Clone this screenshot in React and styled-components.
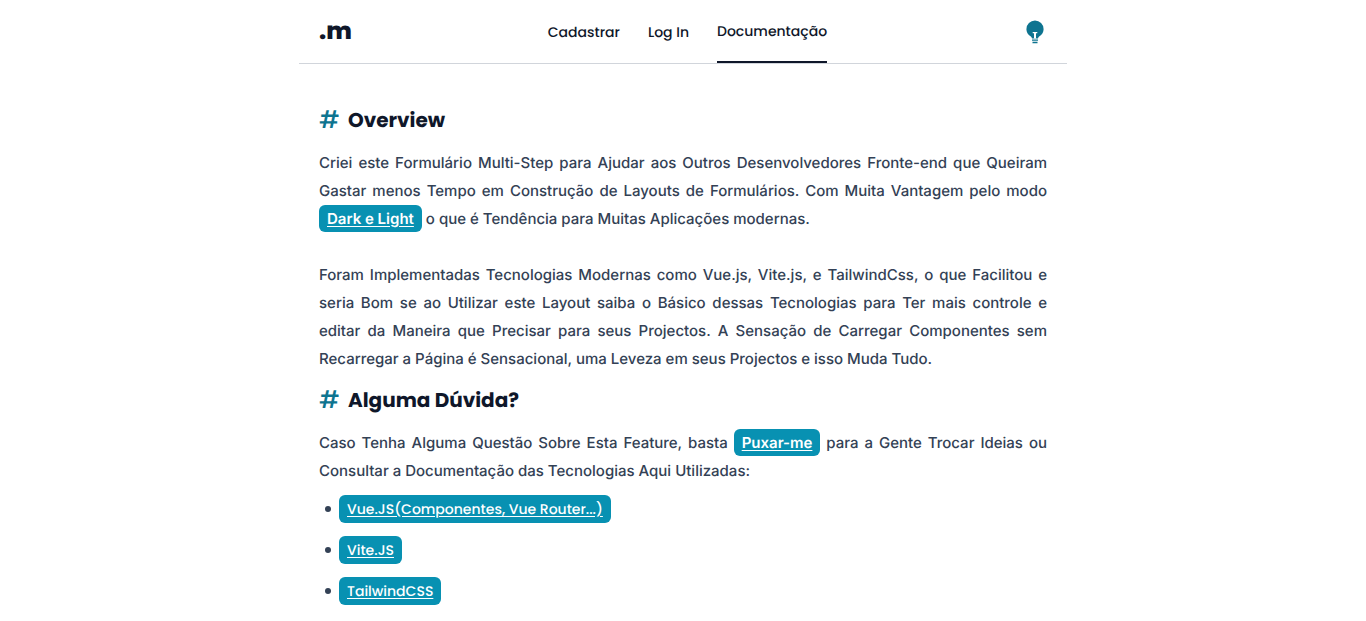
import React from "react";
import styled, { createGlobalStyle } from "styled-components";

const display = `Poppins, Inter, "Open Sans", sans-serif`;

const GlobalStyle = createGlobalStyle`
  *, *::before, *::after { box-sizing: border-box; }
  body {
    margin: 0;
    background: #ffffff;
    color: #334155;
    font-family: Inter, sans-serif;
    font-size: 15px;
    font-weight: 500;
    line-height: 28px;
    text-rendering: geometricPrecision;
  }
`;

const Page = styled.div`
  max-width: 768px;
  margin: 0 auto;
`;

const Header = styled.header`
  display: flex;
  align-items: center;
  justify-content: space-between;
  height: 64px;
  padding: 0 20px;
  border-bottom: 1px solid #d1d5db;
`;

const Logo = styled.a`
  color: #0f172a;
  font-family: ${display};
  font-size: 24px;
  font-weight: 800;
  text-decoration: none;
`;

const Nav = styled.nav`
  display: flex;
  align-self: stretch;
  gap: 28px;
`;

const NavLink = styled.a`
  display: flex;
  align-items: center;
  border-bottom: ${(p) => (p.$active ? "2px solid #0f172a" : "0")};
  color: #0f172a;
  font-family: ${display};
  font-size: 14px;
  text-decoration: none;
`;

const ThemeButton = styled.button`
  display: flex;
  padding: 0;
  border: 0;
  background: none;
  color: #0e7490;
  cursor: pointer;
`;

const Content = styled.main`
  padding: 40px 20px 16px;
`;

const Heading = styled.h2`
  display: flex;
  align-items: center;
  gap: 8px;
  margin: 0 0 13px;
  color: #0f172a;
  font-family: ${display};
  font-size: 20px;
  font-weight: 700;
  line-height: 32px;

  p + & { margin-top: 11px; }
`;

const Hash = styled.span`
  padding-top: 2px;
  color: #0e7490;
  font-size: 24px;
  font-weight: 500;
  line-height: 28px;
`;

const Paragraph = styled.p`
  margin: 0;
  text-align: justify;

  & + & { margin-top: 28px; }
`;

const Pill = styled.a`
  padding: 4px 8px;
  border-radius: 6px;
  background: #0891b2;
  color: #ffffff;
  font-weight: 600;
  text-underline-offset: 2px;
`;

const LinkList = styled.ul`
  display: grid;
  gap: 13px;
  margin: 10px 0 0;
  padding: 0 0 0 6px;
  list-style: none;
`;

const ListItem = styled.li`
  display: flex;
  align-items: center;
  gap: 8px;

  &::before {
    content: "";
    width: 6px;
    height: 6px;
    border-radius: 50%;
    background: #334155;
  }
`;

const ListPill = styled(Pill)`
  padding: 0 8px;
  font-family: ${display};
  font-size: 14px;
  font-weight: 500;
`;

const navItems = ["Cadastrar", "Log In", "Documentação"];
const resources = [
  ["Vue.JS(Componentes, Vue Router...)", "https://vuejs.org"],
  ["Vite.JS", "https://vitejs.dev"],
  ["TailwindCSS", "https://tailwindcss.com"],
];

function BulbIcon() {
  return (
    <svg width="24" height="24" viewBox="0 0 24 24" fill="currentColor" aria-hidden="true">
      <path
        fillRule="evenodd"
        d="M12 .6a8.6 8.6 0 0 0-8.6 8.6c0 3 1.600 5.300 3.700 6.700 1.200.8 1.900 1.500 1.900 2.700h6c0-1.200.7-1.900 1.900-2.700 2.100-1.400 3.700-3.700 3.700-6.700A8.600 8.600 0 0 0 12 .6ZM9.700 12h4.600v1.200h-1.300v5h-2v-5H9.700V12Z"
      />
      <path d="M9 19.400h6v1.300H9zM9.500 21.700h5v1.500h-5z" />
    </svg>
  );
}

function SectionTitle({ children }) {
  return (
    <Heading>
      <Hash>#</Hash>
      {children}
    </Heading>
  );
}

export default function App() {
  return (
    <>
      <GlobalStyle />
      <Page>
        <Header>
          <Logo href="#">.m</Logo>
          <Nav>
            {navItems.map((item) => (
              <NavLink key={item} href="#" $active={item === "Documentação"}>
                {item}
              </NavLink>
            ))}
          </Nav>
          <ThemeButton type="button" aria-label="Alternar tema">
            <BulbIcon />
          </ThemeButton>
        </Header>
        <Content>
          <SectionTitle>Overview</SectionTitle>
          <Paragraph>
            Criei este Formulário Multi-Step para Ajudar aos Outros
            Desenvolvedores Fronte-end que Queiram Gastar menos Tempo em
            Construção de Layouts de Formulários. Com Muita Vantagem pelo modo{" "}
            <Pill href="#">Dark e Light</Pill> o que é Tendência para Muitas
            Aplicações modernas.
          </Paragraph>
          <Paragraph>
            Foram Implementadas Tecnologias Modernas como Vue.js, Vite.js, e
            TailwindCss, o que Facilitou e seria Bom se ao Utilizar este Layout
            saiba o Básico dessas Tecnologias para Ter mais controle e editar da
            Maneira que Precisar para seus Projectos. A Sensação de Carregar
            Componentes sem Recarregar a Página é Sensacional, uma Leveza em
            seus Projectos e isso Muda Tudo.
          </Paragraph>
          <SectionTitle>Alguma Dúvida?</SectionTitle>
          <Paragraph>
            Caso Tenha Alguma Questão Sobre Esta Feature, basta{" "}
            <Pill href="#">Puxar-me</Pill> para a Gente Trocar Ideias ou
            Consultar a Documentação das Tecnologias Aqui Utilizadas:
          </Paragraph>
          <LinkList>
            {resources.map(([label, href]) => (
              <ListItem key={label}>
                <ListPill href={href}>{label}</ListPill>
              </ListItem>
            ))}
          </LinkList>
        </Content>
      </Page>
    </>
  );
}
